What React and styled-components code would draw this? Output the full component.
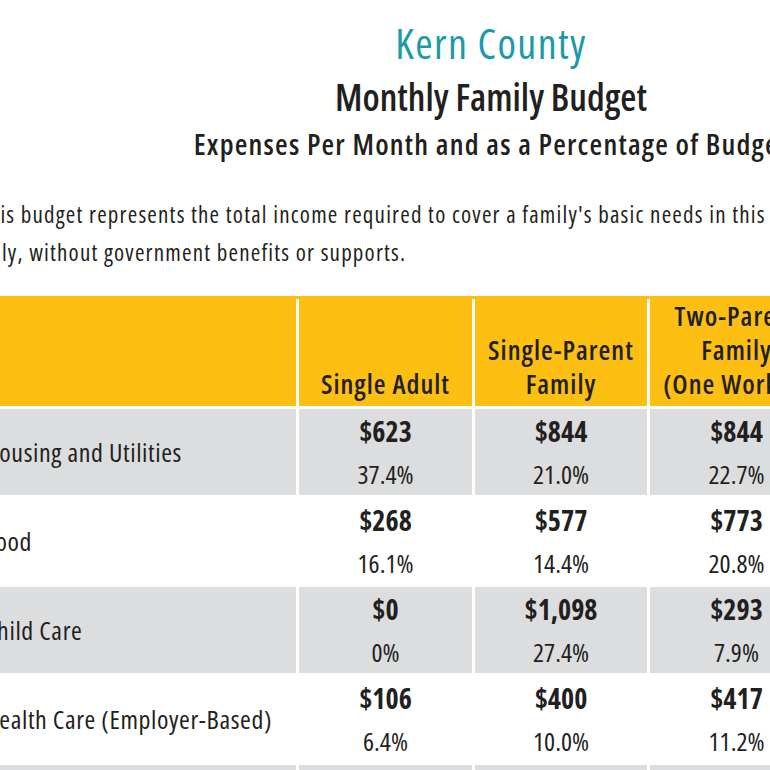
import React from 'react'
import styled, { createGlobalStyle } from 'styled-components'

const Global = createGlobalStyle`
  html, body { margin: 0; padding: 0; background: #fff; }
  body {
    font-family: "Open Sans", "Noto Sans", sans-serif;
    font-stretch: 75%;
    color: #231f20;
  }
`

const Viewport = styled.div`
  width: 770px;
  height: 770px;
  overflow: hidden;
`

const Page = styled.div`
  width: 1022px;
  margin-left: -20px;
  padding-top: 20px;
`

const Header = styled.header`
  display: flex;
  flex-direction: column;
  align-items: center;
  white-space: nowrap;
`

const County = styled.h1`
  margin: 0;
  font-size: 42px;
  line-height: 46px;
  font-weight: 500;
  letter-spacing: 1.4px;
  color: #1b9aa9;
`

const Title = styled.h2`
  margin: 9px 0 0;
  font-size: 37px;
  line-height: 44px;
  font-weight: 600;
`

const Subtitle = styled.h3`
  margin: 8px 0 0;
  font-size: 29px;
  line-height: 34px;
  font-weight: 600;
  letter-spacing: 1.2px;
`

const Intro = styled.p`
  margin: 34px 0 0 -1px;
  font-size: 23px;
  line-height: 38px;
  font-weight: 400;
  letter-spacing: 1.2px;
  white-space: nowrap;
`

const Table = styled.div`
  margin-top: 25px;
  border-top: 3px solid #fcbf12;
  display: grid;
  grid-template-columns: 316px 173px 172px 173px 173px;
  gap: 3px;
`

const HeadCell = styled.div`
  background: #fcbf12;
  height: 107px;
  display: flex;
  align-items: flex-end;
  justify-content: center;
  padding-bottom: 5px;
  box-sizing: border-box;
  text-align: center;
  font-size: 27px;
  line-height: 34px;
  font-weight: 600;
  letter-spacing: 1px;
  white-space: nowrap;
`

const Label = styled.div`
  background: ${(p) => (p.$shade ? '#dcdddf' : '#fff')};
  height: 86px;
  display: flex;
  align-items: center;
  padding-left: 5px;
  font-size: 26px;
  font-weight: 500;
  letter-spacing: 0.6px;
  white-space: nowrap;
`

const Cell = styled.div`
  background: ${(p) => (p.$shade ? '#dcdddf' : '#fff')};
  height: 86px;
  display: grid;
  grid-template-rows: 43px 43px;
  text-align: center;
  align-items: center;
`

const Amount = styled.div`
  font-size: 28px;
  font-weight: 700;
`

const Share = styled.div`
  font-size: 26px;
  font-weight: 400;
`

const columns = [
  ['Single Adult'],
  ['Single-Parent', 'Family'],
  ['Two-Parent', 'Family', '(One Worker)'],
  ['Two-Parent', 'Family', '(Two Workers)'],
]

const expenses = [
  {
    label: 'Housing and Utilities',
    values: [['$623', '37.4%'], ['$844', '21.0%'], ['$844', '22.7%'], ['$844', '17.9%']],
  },
  {
    label: 'Food',
    values: [['$268', '16.1%'], ['$577', '14.4%'], ['$773', '20.8%'], ['$773', '16.4%']],
  },
  {
    label: 'Child Care',
    values: [['$0', '0%'], ['$1,098', '27.4%'], ['$293', '7.9%'], ['$1,098', '23.3%']],
  },
  {
    label: 'Health Care (Employer-Based)',
    values: [['$106', '6.4%'], ['$400', '10.0%'], ['$417', '11.2%'], ['$417', '8.8%']],
  },
  {
    label: 'Transportation',
    values: [['$274', '16.4%'], ['$375', '9.4%'], ['$375', '10.1%'], ['$596', '12.6%']],
  },
]

export default function App() {
  return (
    <Viewport>
      <Global />
      <Page>
        <Header>
          <County>Kern County</County>
          <Title>Monthly Family Budget</Title>
          <Subtitle>Expenses Per Month and as a Percentage of Budget</Subtitle>
        </Header>
        <Intro>
          This budget represents the total income required to cover a family's basic needs in this county with earnings
          <br />
          only, without government benefits or supports.
        </Intro>
        <Table>
          <HeadCell />
          {columns.map((lines, i) => (
            <HeadCell key={i}>
              <div>
                {lines.map((l) => (
                  <div key={l}>{l}</div>
                ))}
              </div>
            </HeadCell>
          ))}
          {expenses.map((row, r) => (
            <React.Fragment key={row.label}>
              <Label $shade={r % 2 === 0}>{row.label}</Label>
              {row.values.map(([amount, share], c) => (
                <Cell key={c} $shade={r % 2 === 0}>
                  <Amount>{amount}</Amount>
                  <Share>{share}</Share>
                </Cell>
              ))}
            </React.Fragment>
          ))}
        </Table>
      </Page>
    </Viewport>
  )
}
